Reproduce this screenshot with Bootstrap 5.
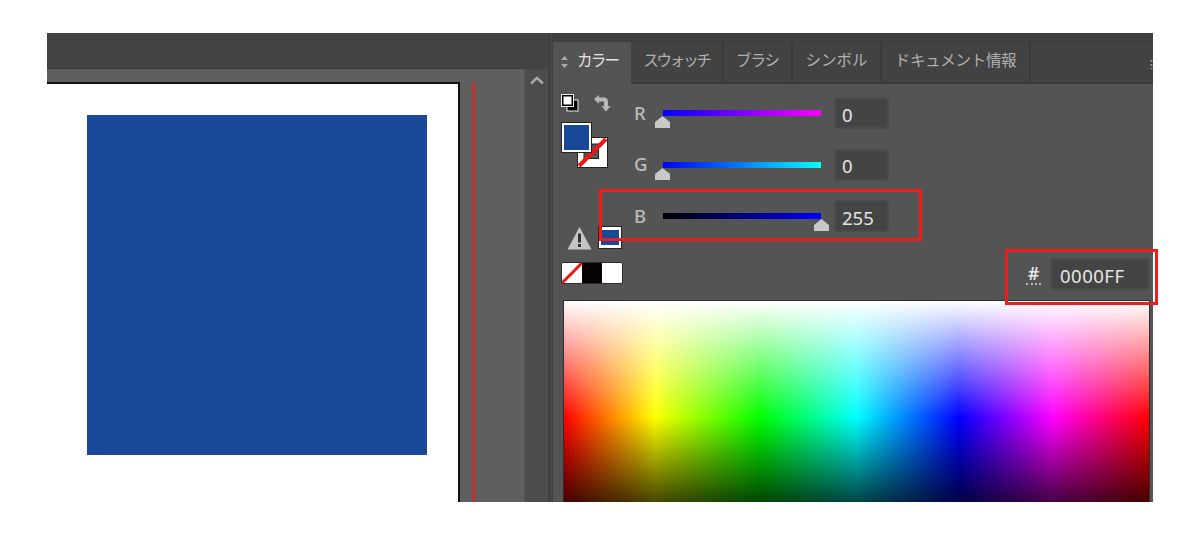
<!DOCTYPE html>
<html lang="ja">
<head>
<meta charset="utf-8">
<title>カラー</title>
<link rel="stylesheet" href="https://cdn.jsdelivr.net/npm/bootstrap@5.3.0/dist/css/bootstrap.min.css">
<style>
html,body{height:537px;overflow:hidden;background:#fff}
.stage{width:1200px;height:537px;padding:33px 47px 35px;font-family:"Noto Sans","Noto Sans CJK JP",sans-serif}
.shot{height:469px}
.docside{width:497px}
.doctop{height:35px;background:#434343}
.docmain{border-top:1px solid #3a3a3a}
.docleft{width:477px}
.rulerbar{height:13px;background:#5f5f5f}
.pasteboard{background:#5f5f5f}
.artboard{width:413px;background:#fff;border-right:2px solid #111;border-top:2px solid #111;padding:31px 0 0 40px}
.artsquare{width:340px;height:340px;background:#1a4899}
.gutter{width:64px;padding-left:13px}
.guide{width:2px;background:#f01c1c;height:100%}
.scrollwrap{width:28px;background:#434343;margin-left:-20px}
.scrollspacer{height:36px;flex:none}
.scrollcol{width:24px;background:#4c4c4c;border-left:1px solid #565656;padding-top:6px}
.scrollcol svg{display:block;margin:0 auto}
.shot-divider{width:4px;margin-left:-4px;background:#404040;border-right:1px solid #4a4a4a}
.colorpanel{background:#545454;min-width:0;border-left:1px solid #404040}
.panel-cap{height:9px;background:#3f3f3f}
.tabbar{height:42px;background:#424242;border-bottom:2px solid #3a3a3a;flex-wrap:nowrap}
.tabbar .nav-link{height:42px;padding:0;color:#b0b0b0;font-size:15.5px;font-weight:400;border-right:2px solid #3a3a3a;text-align:center;line-height:37px}
.tabbar .nav-link.active{background:#545454;color:#e4e4e4;border-right:0;width:78px;padding-left:24px;text-align:left;position:relative;letter-spacing:-1.7px}
.tab-updown{position:absolute;left:7px;top:13px}
.tabbar .tab-a{width:93px;letter-spacing:-2.2px}
.tabbar .tab-b{width:69px;letter-spacing:-1px}
.tabbar .tab-c{width:89px}
.tabbar .tab-d{width:149px;letter-spacing:-.3px}
.tabmenu{margin-left:auto;width:3px;margin-top:17px;height:10px;background:radial-gradient(circle,#999 1px,transparent 1.2px) 0 0/3px 4px}
.ctrls{height:216px}
.leftcol{width:81px;padding:10px 0 0 8px}
.icon-row{height:18px;gap:14px}
.fillstack{width:47px;height:46px;margin-top:10px;position:relative}
.fillbox{position:absolute;left:0;top:0;width:31px;height:31px;background:#fff;border:1px solid #222;padding:2px;box-shadow:inset 0 0 0 1px #fff}
.fillbox span{display:block;height:100%;background:#1a4899}
.strokebox{position:absolute;left:16px;top:15px;width:31px;height:31px}
.warnrow{margin-top:58px;height:24px;gap:6px;padding-left:6px}
.websafe{width:24px;height:23px;background:#fff;border:1px solid #222;padding:3px 2px}
.websafe span{display:block;height:100%;background:#1a4899}
.triple{margin-top:12px;width:62px;height:22px;border:1px solid #2c2c2c;border-radius:2px;overflow:hidden}
.triple>*{flex:1 1 0;height:100%;display:block}
.tri-black{background:#080404}
.tri-white{background:#fff}
.tri-none{background:#fff}
.rightcol{padding-top:13px;padding-right:3px}
.slider-row{height:32px;margin-bottom:19.5px}
.chan{width:29px;color:#bcbcbc;font-size:18.5px;font-weight:500;line-height:1}
.track{width:158px;height:6px;position:relative;margin-right:13px}
.track-r{background:linear-gradient(90deg,#00f,#f0f)}
.track-g{background:linear-gradient(90deg,#00f,#0ff)}
.track-b{background:linear-gradient(90deg,#000,#00f)}
.knob{position:absolute;top:6px;width:15px;height:12px}
.knob-min{left:-8px}
.knob-max{right:-8px}
.stage .val,.stage .hexval{height:32px;padding:2px 0 0 6px;background:#444;border:2px solid #4b4b4b;border-radius:4px;color:#e6e6e6;font-size:18.5px;line-height:1;box-shadow:none}
.stage .val{width:55px}
.stage .hexval{width:100px;padding-left:8px;letter-spacing:.5px}
.hexrow{margin-top:26px;height:32px}
.hashmark{color:#e4e4e4;font-size:18px;font-weight:600;line-height:1;margin-right:9px;border-bottom:2px dotted #bbb;padding:0 0 1px;width:15px;text-align:center}
.spectrum{height:202px;margin:0 3px 0 10px;border:1px solid #2e2e2e;border-bottom:0;background:linear-gradient(180deg,#fff 0,rgba(255,255,255,0) 58%,rgba(0,0,0,0) 58%,#000 116%),linear-gradient(90deg,#f00 0,#ff0 15.5%,#0f0 33.5%,#0ff 50%,#00f 67.5%,#f0f 83.5%,#f00 100%)}
.callout{position:absolute;border:3px solid #f01c1c;pointer-events:none}
.callout-b{left:599px;top:189px;width:323px;height:52px}
.callout-hex{left:1005px;top:249px;width:153px;height:56px}
</style>
</head>
<body>
<div class="stage position-relative">
  <div class="shot d-flex overflow-hidden">
    <div class="docside d-flex flex-column flex-shrink-0">
      <div class="doctop"></div>
      <div class="docmain d-flex flex-column flex-grow-1">
        <div class="rulerbar docleft"></div>
        <div class="pasteboard docleft d-flex flex-grow-1">
          <div class="artboard"><div class="artsquare"></div></div>
          <div class="gutter"><div class="guide"></div></div>
        </div>
      </div>
    </div>
    <div class="scrollwrap d-flex flex-column flex-shrink-0">
      <div class="scrollspacer"></div>
      <div class="scrollcol flex-grow-1">
        <svg width="16" height="10" viewBox="0 0 16 10"><path d="M2 8.5 L8 3 L14 8.5" fill="none" stroke="#a8a8a8" stroke-width="2.4"/></svg>
      </div>
    </div>
    <div class="shot-divider flex-shrink-0"></div>
    <div class="colorpanel flex-grow-1 d-flex flex-column">
      <div class="panel-cap"></div>
      <ul class="nav tabbar">
        <li class="nav-item"><a class="nav-link active" href="#"><svg class="tab-updown" width="9" height="14" viewBox="0 0 9 14"><path d="M4.5 1 L8 5 H1 Z M4.5 13 L1 9 H8 Z" fill="#aaa"/></svg>カラー</a></li>
        <li class="nav-item"><a class="nav-link tab-a" href="#">スウォッチ</a></li>
        <li class="nav-item"><a class="nav-link tab-b" href="#">ブラシ</a></li>
        <li class="nav-item"><a class="nav-link tab-c" href="#">シンボル</a></li>
        <li class="nav-item"><a class="nav-link tab-d" href="#">ドキュメント情報</a></li>
        <li class="tabmenu"></li>
      </ul>
      <div class="ctrls d-flex">
        <div class="leftcol flex-shrink-0">
          <div class="icon-row d-flex">
            <svg width="18" height="18" viewBox="0 0 18 18"><rect x="5.5" y="5.5" width="12" height="12" fill="#eee"/><rect x="6.5" y="6.5" width="10" height="10" fill="#000"/><rect x="0" y="0" width="13" height="13" fill="#eee"/><rect x="1" y="1" width="11" height="11" fill="#000"/><rect x="2.5" y="2.5" width="8" height="8" fill="#fff"/></svg>
            <svg width="18" height="18" viewBox="0 0 18 18"><path d="M1 5 L6 1 V3.5 H11 Q15 3.5 15 8 V12 H17.5 L13 17.5 L8.5 12 H11 V8 Q11 7.5 10 7.5 H6 V10 Z" fill="#b8b8b8"/></svg>
          </div>
          <div class="fillstack">
            <svg class="strokebox" viewBox="0 0 31 31"><rect x=".5" y=".5" width="30" height="30" fill="#fff" stroke="#222"/><rect x="7" y="7" width="14.5" height="14.5" fill="#555" stroke="#222"/><path d="M2 29 L29 2" stroke="#f01414" stroke-width="4"/></svg>
            <div class="fillbox"><span></span></div>
          </div>
          <div class="warnrow d-flex">
            <svg width="25" height="24" viewBox="0 0 25 24"><path d="M12.5 1 L24.5 23.5 H.5 Z" fill="#c4c4c4"/><rect x="11" y="7.5" width="3" height="9" fill="#333"/><rect x="11" y="18" width="3" height="3" fill="#333"/></svg>
            <div class="websafe"><span></span></div>
          </div>
          <div class="triple d-flex">
            <svg class="tri-none" viewBox="0 0 20 20" preserveAspectRatio="none"><path d="M0 20 L20 0" stroke="#f01414" stroke-width="3"/></svg>
            <span class="tri-black"></span>
            <span class="tri-white"></span>
          </div>
        </div>
        <div class="rightcol flex-grow-1">
          <div class="slider-row d-flex align-items-center">
            <span class="chan">R</span>
            <div class="track track-r"><svg class="knob knob-min" viewBox="0 0 15 12"><path d="M7.5 0 L15 6 V12 H0 V6 Z" fill="#c8c8c8"/></svg></div>
            <input class="form-control val" value="0" aria-label="R">
          </div>
          <div class="slider-row d-flex align-items-center">
            <span class="chan">G</span>
            <div class="track track-g"><svg class="knob knob-min" viewBox="0 0 15 12"><path d="M7.5 0 L15 6 V12 H0 V6 Z" fill="#c8c8c8"/></svg></div>
            <input class="form-control val" value="0" aria-label="G">
          </div>
          <div class="slider-row d-flex align-items-center mb-0">
            <span class="chan">B</span>
            <div class="track track-b"><svg class="knob knob-max" viewBox="0 0 15 12"><path d="M7.5 0 L15 6 V12 H0 V6 Z" fill="#c8c8c8"/></svg></div>
            <input class="form-control val" value="255" aria-label="B">
          </div>
          <div class="hexrow d-flex align-items-center justify-content-end">
            <span class="hashmark">#</span>
            <input class="form-control hexval" value="0000FF" aria-label="#">
          </div>
        </div>
      </div>
      <div class="spectrum flex-grow-1"></div>
    </div>
  </div>
  <div class="callout callout-b"></div>
  <div class="callout callout-hex"></div>
</div>
<script src="https://cdn.jsdelivr.net/npm/bootstrap@5.3.0/dist/js/bootstrap.bundle.min.js"></script>
</body>
</html>
